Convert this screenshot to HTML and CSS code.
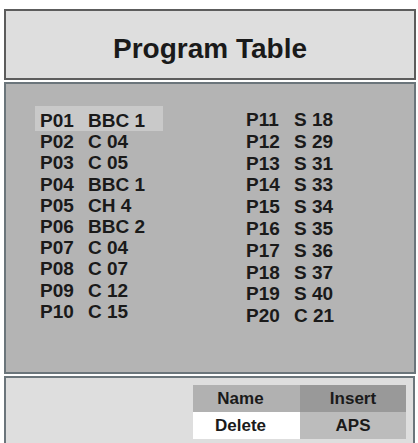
FILE: index.html
```html
<!DOCTYPE html>
<html>
<head>
<meta charset="utf-8">
<link rel="stylesheet" href="styles.css">
</head>
<body>
<div class="screen">
  <div class="header"><h1 class="title">Program Table</h1></div>
  <div class="panel">
    <div class="col col-left">
      <div class="row sel"><span class="code">P01</span><span class="name">BBC 1</span></div>
      <div class="row"><span class="code">P02</span><span class="name">C 04</span></div>
      <div class="row"><span class="code">P03</span><span class="name">C 05</span></div>
      <div class="row"><span class="code">P04</span><span class="name">BBC 1</span></div>
      <div class="row"><span class="code">P05</span><span class="name">CH 4</span></div>
      <div class="row"><span class="code">P06</span><span class="name">BBC 2</span></div>
      <div class="row"><span class="code">P07</span><span class="name">C 04</span></div>
      <div class="row"><span class="code">P08</span><span class="name">C 07</span></div>
      <div class="row"><span class="code">P09</span><span class="name">C 12</span></div>
      <div class="row"><span class="code">P10</span><span class="name">C 15</span></div>
    </div>
    <div class="col col-right">
      <div class="row"><span class="code">P11</span><span class="name">S 18</span></div>
      <div class="row"><span class="code">P12</span><span class="name">S 29</span></div>
      <div class="row"><span class="code">P13</span><span class="name">S 31</span></div>
      <div class="row"><span class="code">P14</span><span class="name">S 33</span></div>
      <div class="row"><span class="code">P15</span><span class="name">S 34</span></div>
      <div class="row"><span class="code">P16</span><span class="name">S 35</span></div>
      <div class="row"><span class="code">P17</span><span class="name">S 36</span></div>
      <div class="row"><span class="code">P18</span><span class="name">S 37</span></div>
      <div class="row"><span class="code">P19</span><span class="name">S 40</span></div>
      <div class="row"><span class="code">P20</span><span class="name">C 21</span></div>
    </div>
  </div>
  <div class="footer">
    <div class="buttons">
      <div class="btn btn-name">Name</div>
      <div class="btn btn-insert">Insert</div>
      <div class="btn btn-delete">Delete</div>
      <div class="btn btn-aps">APS</div>
    </div>
  </div>
</div>
</body>
</html>
```
FILE: styles.css
```css
html, body {
  margin: 0;
  padding: 0;
  background: #ffffff;
}
body {
  width: 418px;
  height: 443px;
  overflow: hidden;
  font-family: "Liberation Sans", Arial, sans-serif;
  color: #1a1a1a;
}
.screen {
  display: flex;
  flex-direction: column;
  height: 443px;
  box-sizing: border-box;
  padding: 9px 2px 0 4px;
  gap: 2px;
}
.header {
  height: 71px;
  box-sizing: border-box;
  background: #dedede;
  border: 2px solid #5c5c5c;
  padding-top: 22px;
}
.title {
  margin: 0;
  text-align: center;
  font-size: 28px;
  line-height: 32px;
  font-weight: bold;
}
.panel {
  height: 292px;
  box-sizing: border-box;
  background: #b4b4b4;
  border: 2px solid #6b757b;
  display: flex;
  padding: 26px 0 0 29px;
  gap: 78px;
}
.col {
  display: flex;
  flex-direction: column;
  width: 128px;
}
.col-left .row { line-height: 21.2px; }
.col-right { margin-top: -1px; }
.col-right .row { line-height: 21.8px; }
.row {
  display: flex;
  padding: 0 5px;
  font-size: 19px;
  font-weight: bold;
  white-space: nowrap;
}
.row.sel {
  background: #c9c9c9;
  padding-top: 4px;
  margin-top: -4px;
}
.code { width: 48px; }
.footer {
  flex: 1;
  box-sizing: border-box;
  background: #dedede;
  border: 2px solid #6b757b;
  border-bottom: none;
  margin-right: 1px;
  display: flex;
  justify-content: flex-end;
  align-items: flex-start;
  padding: 7px 7px 0 0;
}
.buttons {
  display: grid;
  grid-template-columns: 107px 106px;
  grid-template-rows: 27px 27px;
}
.btn {
  display: flex;
  align-items: center;
  justify-content: center;
  font-size: 17px;
  font-weight: bold;
}
.btn-name, .btn-delete { padding-right: 12px; }
.btn-name { background: #b1b1b1; }
.btn-insert { background: #999999; }
.btn-delete { background: #ffffff; }
.btn-aps { background: #bcbcbc; }
```
